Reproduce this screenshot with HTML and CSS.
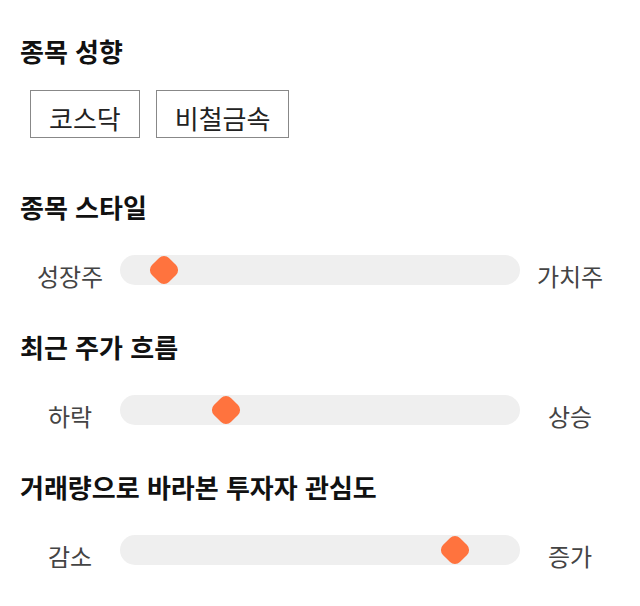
FILE: index.html
```html
<!DOCTYPE html>
<html lang="ko">
	<head>
		<meta charset="utf-8" />
		<link rel="stylesheet" href="styles.css">
		<title>종목 성향</title>
	</head>
	<body>
		<div id="wrapper">
			<div class="section">
				<h2>종목 성향</h2>
				<div class="tags">
					<span class="tag">코스닥</span>
					<span class="tag">비철금속</span>
				</div>
			</div>

			<div class="section">
				<h2>종목 스타일</h2>
				<div class="scale">
					<span class="label">성장주</span>
					<div class="track"><i class="thumb" style="left:11%"></i></div>
					<span class="label">가치주</span>
				</div>
			</div>

			<div class="section">
				<h2>최근 주가 흐름</h2>
				<div class="scale">
					<span class="label">하락</span>
					<div class="track"><i class="thumb" style="left:26.5%"></i></div>
					<span class="label">상승</span>
				</div>
			</div>

			<div class="section">
				<h2>거래량으로 바라본 투자자 관심도</h2>
				<div class="scale">
					<span class="label">감소</span>
					<div class="track"><i class="thumb" style="left:83.75%"></i></div>
					<span class="label">증가</span>
				</div>
			</div>
		</div>
	</body>
</html>
```

FILE: styles.css
```css
body,html{
	background-color:#fff;
	font-family:"Noto Sans CJK KR", "Noto Sans", sans-serif;
}
body,html,div,h2,p{
	padding:0;
	margin:0;
}
#wrapper{
	width:600px;
	padding:35px 20px 0;
}
.section{
	margin-bottom:37px;
}
.section h2{
	font-size:26px;
	line-height:32px;
	font-weight:700;
	color:#111;
	margin-bottom:23px;
}
.tags{
	display:flex;
	gap:16px;
	padding-left:10px;
	margin-bottom:53px;
}
.tag{
	display:block;
	border:1px solid #888;
	padding:8px 18px 0;
	font-size:26px;
	line-height:38px;
	color:#222;
}
.scale{
	display:grid;
	grid-template-columns:100px 1fr 100px;
	align-items:center;
	height:48px;
}
.label{
	text-align:center;
	padding-top:10px;
	font-size:24px;
	color:#444;
}
.track{
	position:relative;
	height:30px;
	border-radius:15px;
	background-color:#efefef;
}
.thumb{
	position:absolute;
	top:50%;
	width:24px;
	height:24px;
	margin:-12px 0 0 -12px;
	border-radius:7px;
	background-color:#ff733e;
	transform:rotate(45deg);
}
```
